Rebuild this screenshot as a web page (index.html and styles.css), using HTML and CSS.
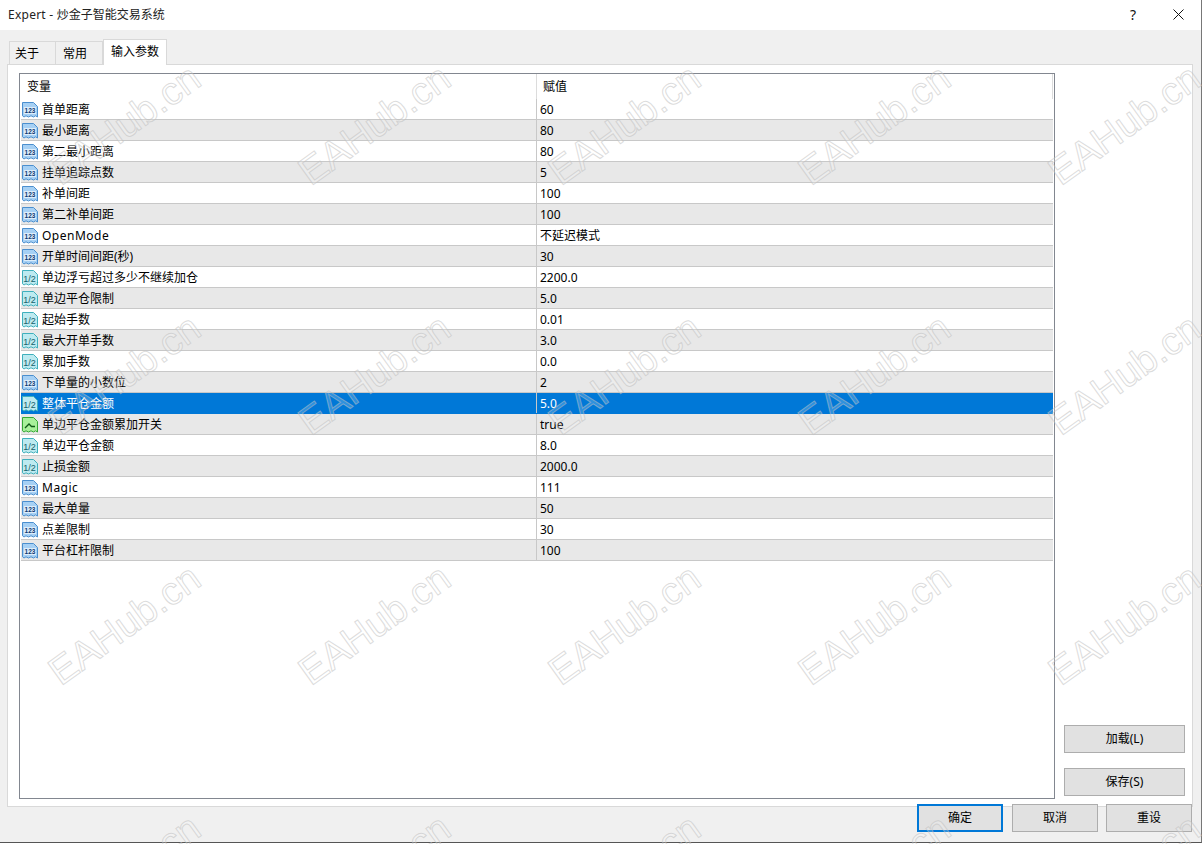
FILE: index.html
```html
<!DOCTYPE html>
<html lang="zh-CN">
<head>
<meta charset="utf-8">
<title>Expert - 炒金子智能交易系统</title>
<link rel="stylesheet" href="styles.css">
</head>
<body>
<svg class="defs" width="0" height="0" aria-hidden="true">
  <defs>
    <symbol id="ic-int" viewBox="0 0 16 16">
      <path d="M.5.5H11.5L15.5 4.5V15L13.5 13.8 11.5 15 9 13.8 6.5 15 4 13.8 2 15 .5 13.8Z" fill="#a6d0f4" stroke="#4b8fcf"/>
      <path d="M2 5H14V12H2Z" fill="#dcedfb"/>
      <text x="8" y="11" class="ic-text">123</text>
    </symbol>
    <symbol id="ic-dbl" viewBox="0 0 16 16">
      <path d="M.5.5H11.5L15.5 4.5V15L13.5 13.8 11.5 15 9 13.8 6.5 15 4 13.8 2 15 .5 13.8Z" fill="#bdeaf0" stroke="#3fb0bd"/>
      <text x="7.5" y="11.5" class="ic-text ic-frac">1/2</text>
    </symbol>
    <symbol id="ic-bool" viewBox="0 0 16 16">
      <path d="M.5.5H11.5L15.5 4.5V15L13.5 13.8 11.5 15 9 13.8 6.5 15 4 13.8 2 15 .5 13.8Z" fill="#a8f09a" stroke="#35a835"/>
      <path d="M3 11L7 7 9.5 9.5H13" fill="none" stroke="#0f5a16" stroke-width="1.3"/>
    </symbol>
  </defs>
</svg>
<div class="window">
  <header class="titlebar">
    <span class="title"><span class="latin-title">Expert - </span>炒金子智能交易系统</span>
    <div class="title-actions">
      <span class="help">?</span>
      <svg class="close" width="11" height="11" viewBox="0 0 11 11"><path d="M.5.5l10 10M10.5.5l-10 10" stroke="#111" fill="none"/></svg>
    </div>
  </header>
  <main class="body">
    <nav class="tabs">
      <span class="tab">关于</span>
      <span class="tab tab-two">常用</span>
      <span class="tab tab-active">输入参数</span>
    </nav>
    <section class="panel">
      <div class="list">
        <div class="list-head">
          <span class="col-name">变量</span>
          <span class="col-value">赋值</span>
        </div>
        <div class="row"><span class="name"><svg class="ic"><use href="#ic-int"/></svg>首单距离</span><span class="val">60</span></div>
        <div class="row"><span class="name"><svg class="ic"><use href="#ic-int"/></svg>最小距离</span><span class="val">80</span></div>
        <div class="row"><span class="name"><svg class="ic"><use href="#ic-int"/></svg>第二最小距离</span><span class="val">80</span></div>
        <div class="row"><span class="name"><svg class="ic"><use href="#ic-int"/></svg>挂单追踪点数</span><span class="val">5</span></div>
        <div class="row"><span class="name"><svg class="ic"><use href="#ic-int"/></svg>补单间距</span><span class="val">100</span></div>
        <div class="row"><span class="name"><svg class="ic"><use href="#ic-int"/></svg>第二补单间距</span><span class="val">100</span></div>
        <div class="row"><span class="name"><svg class="ic"><use href="#ic-int"/></svg><span class="latin">OpenMode</span></span><span class="val">不延迟模式</span></div>
        <div class="row"><span class="name"><svg class="ic"><use href="#ic-int"/></svg>开单时间间距(秒)</span><span class="val">30</span></div>
        <div class="row"><span class="name"><svg class="ic"><use href="#ic-dbl"/></svg>单边浮亏超过多少不继续加仓</span><span class="val">2200.0</span></div>
        <div class="row"><span class="name"><svg class="ic"><use href="#ic-dbl"/></svg>单边平仓限制</span><span class="val">5.0</span></div>
        <div class="row"><span class="name"><svg class="ic"><use href="#ic-dbl"/></svg>起始手数</span><span class="val">0.01</span></div>
        <div class="row"><span class="name"><svg class="ic"><use href="#ic-dbl"/></svg>最大开单手数</span><span class="val">3.0</span></div>
        <div class="row"><span class="name"><svg class="ic"><use href="#ic-dbl"/></svg>累加手数</span><span class="val">0.0</span></div>
        <div class="row"><span class="name"><svg class="ic"><use href="#ic-int"/></svg>下单量的小数位</span><span class="val">2</span></div>
        <div class="row row-selected"><span class="name"><svg class="ic"><use href="#ic-dbl"/></svg>整体平仓金额</span><span class="val">5.0</span></div>
        <div class="row"><span class="name"><svg class="ic"><use href="#ic-bool"/></svg>单边平仓金额累加开关</span><span class="val">true</span></div>
        <div class="row"><span class="name"><svg class="ic"><use href="#ic-dbl"/></svg>单边平仓金额</span><span class="val">8.0</span></div>
        <div class="row"><span class="name"><svg class="ic"><use href="#ic-dbl"/></svg>止损金额</span><span class="val">2000.0</span></div>
        <div class="row"><span class="name"><svg class="ic"><use href="#ic-int"/></svg><span class="latin">Magic</span></span><span class="val">111</span></div>
        <div class="row"><span class="name"><svg class="ic"><use href="#ic-int"/></svg>最大单量</span><span class="val">50</span></div>
        <div class="row"><span class="name"><svg class="ic"><use href="#ic-int"/></svg>点差限制</span><span class="val">30</span></div>
        <div class="row"><span class="name"><svg class="ic"><use href="#ic-int"/></svg>平台杠杆限制</span><span class="val">100</span></div>
      </div>
      <aside class="side">
        <button class="btn btn-side">加载(L)</button>
        <button class="btn btn-side">保存(S)</button>
      </aside>
    </section>
    <footer class="footer">
      <button class="btn btn-foot btn-default">确定</button>
      <button class="btn btn-foot">取消</button>
      <button class="btn btn-foot">重设</button>
    </footer>
  </main>
</div>
<div class="watermarks" aria-hidden="true">
  <span>EAHub.cn</span><span>EAHub.cn</span><span>EAHub.cn</span><span>EAHub.cn</span><span>EAHub.cn</span>
  <span>EAHub.cn</span><span>EAHub.cn</span><span>EAHub.cn</span><span>EAHub.cn</span><span>EAHub.cn</span>
  <span>EAHub.cn</span><span>EAHub.cn</span><span>EAHub.cn</span><span>EAHub.cn</span><span>EAHub.cn</span>
  <span>EAHub.cn</span><span>EAHub.cn</span><span>EAHub.cn</span><span>EAHub.cn</span><span>EAHub.cn</span>
</div>
</body>
</html>
```

FILE: styles.css
```css
* { box-sizing: border-box; }
html, body { margin: 0; padding: 0; }
body {
  position: relative;
  width: 1203px;
  height: 844px;
  overflow: hidden;
  background: #fff;
  color: #000;
  font: 12px/16px "Noto Sans", "Noto Sans CJK SC", sans-serif;
}
.defs { position: absolute; }
.window {
  display: flex;
  flex-direction: column;
  width: 1202px;
  height: 843px;
  border-right: 1px solid #777;
  border-bottom: 1px solid #555;
}
.titlebar {
  flex: none;
  display: flex;
  align-items: center;
  justify-content: space-between;
  height: 30px;
  padding: 0 17px 1px 8px;
  background: #fff;
}
.title { color: #222; font-size: 12px; }
.latin-title { letter-spacing: 0.25px; }
.latin { letter-spacing: 0.5px; }
.title-actions { display: flex; align-items: center; gap: 37px; }
.help { font-size: 14px; color: #111; }
.close { display: block; }
.body {
  flex: 1;
  display: flex;
  flex-direction: column;
  padding: 9px 8px 0 7px;
  background: #f0f0f0;
  min-height: 0;
}
.tabs {
  flex: none;
  display: flex;
  align-items: flex-end;
  height: 25px;
  padding-left: 2px;
  position: relative;
  z-index: 1;
}
.tab {
  display: flex;
  align-items: center;
  width: 47px;
  height: 23px;
  padding: 1px 0 0 5px;
  background: #f0f0f0;
  border: 1px solid #d9d9d9;
  border-bottom: 0;
}
.tab-two { padding-left: 7px; border-left: 0; }
.tab-active {
  width: 64px;
  height: 26px;
  padding: 0 0 2px 7px;
  background: #fff;
  margin-bottom: -1px;
}
.panel {
  flex: none;
  display: flex;
  gap: 9px;
  height: 743px;
  padding: 8px 10px 8px 11px;
  background: #fff;
  border: 1px solid #d9d9d9;
}
.list {
  flex: none;
  width: 1036px;
  height: 726px;
  padding: 0 1px;
  background: #fff;
  border: 1px solid #828790;
}
.list-head {
  display: flex;
  height: 25px;
  line-height: 25px;
}
.col-name {
  width: 516px;
  padding-left: 6px;
  border-right: 1px solid #dcdcdc;
}
.col-value {
  flex: 1;
  padding-left: 6px;
  border-right: 1px solid #dcdcdc;
}
.row {
  display: flex;
  height: 21px;
  line-height: 18px;
  border-bottom: 1px solid #c8c8c8;
  background: #fff;
}
.row:nth-child(odd) { background: #e8e8e8; }
.row .name {
  display: flex;
  align-items: center;
  gap: 4px;
  width: 516px;
  padding: 2px 0 0 1px;
  border-right: 1px solid #c8c8c8;
  white-space: nowrap;
}
.row .val { flex: 1; padding: 2px 0 0 3px; }
.row.row-selected {
  background: #0078d7;
  color: #fff;
  border-bottom-color: #0078d7;
}
.ic { flex: none; width: 16px; height: 16px; }
.ic-text {
  fill: #0f3a72;
  font: 700 6.5px "Liberation Sans", sans-serif;
  text-anchor: middle;
}
.ic-frac { fill: #14626c; font-size: 9px; font-weight: 400; }
.side {
  flex: 1;
  display: flex;
  flex-direction: column;
  justify-content: flex-end;
  gap: 15px;
  padding-bottom: 2px;
}
.btn {
  display: block;
  margin: 0;
  padding: 0;
  color: #000;
  background: #e1e1e1;
  border: 1px solid #adadad;
  font: inherit;
}
.btn-side { width: 121px; height: 28px; }
.footer {
  flex: none;
  display: flex;
  justify-content: flex-end;
  gap: 8px;
  margin-top: -3px;
  padding-right: 1px;
  position: relative;
}
.btn-foot { width: 86px; height: 28px; }
.btn-default { border: 2px solid #0078d7; margin-right: 1px; }
.watermarks {
  position: absolute;
  inset: 0;
  overflow: hidden;
  display: grid;
  grid-template-columns: repeat(5, 250px);
  grid-auto-rows: 250px;
  pointer-events: none;
}
.watermarks span {
  display: flex;
  align-items: center;
  justify-content: center;
  font: 39px/1 "Liberation Sans", sans-serif;
  color: rgba(255, 255, 255, 0.2);
  -webkit-text-stroke: 1px rgba(190, 190, 190, 0.55);
  transform: translate(-1px, -1px) rotate(-35.7deg);
  white-space: nowrap;
}
```
